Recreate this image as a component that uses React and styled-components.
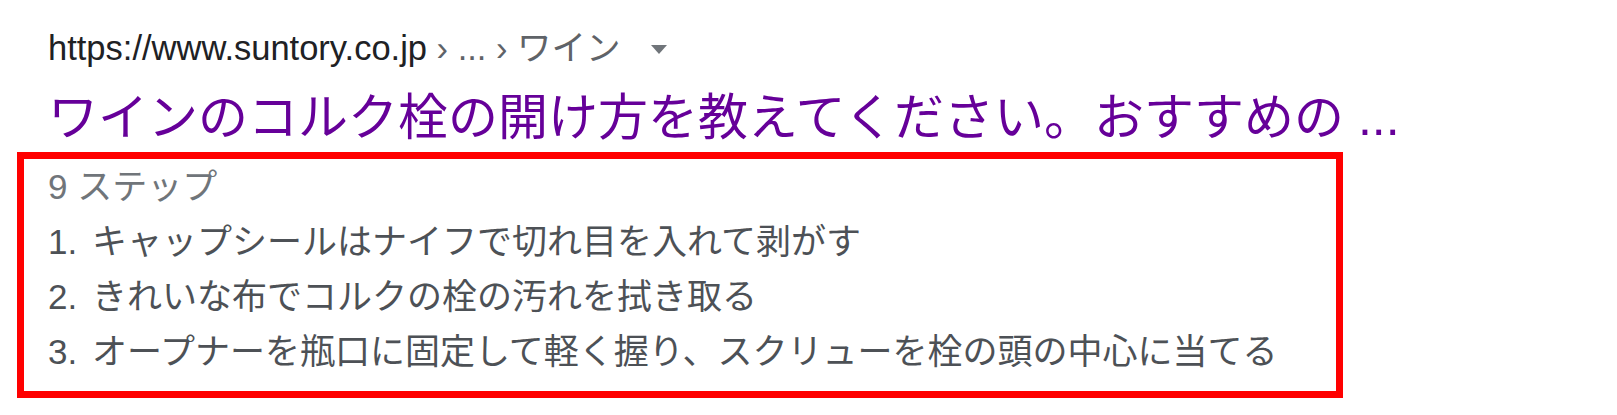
import React from 'react';
import styled, { createGlobalStyle } from 'styled-components';

const GlobalStyle = createGlobalStyle`
  body {
    margin: 0;
    background: #fff;
    font-family: "Liberation Sans", Arial, "Noto Sans CJK JP", sans-serif;
  }
`;

const Page = styled.div`
  padding: 26px 0 0 48px;
`;

const UrlLine = styled.div`
  display: flex;
  align-items: center;
  font-size: 34.5px;
  line-height: 44px;
  color: #202124;
  white-space: nowrap;
`;

const Crumbs = styled.span`
  color: #5f6368;
`;

const Caret = styled.span`
  display: inline-block;
  margin-left: 30px;
  margin-top: 2px;
  width: 0;
  height: 0;
  border-left: 8px solid transparent;
  border-right: 8px solid transparent;
  border-top: 9px solid #70757a;
`;

const Title = styled.h3`
  margin: 17px 0 0;
  font-weight: normal;
  font-size: 50px;
  line-height: 62px;
  color: #660099;
  white-space: nowrap;
`;

const Box = styled.div`
  margin: 3px 0 0 -31px;
  width: 1264px;
  border: 7px solid #ff0000;
  padding: 0 24px 12px;
`;

const Steps = styled.div`
  font-size: 35px;
  line-height: 55px;
  color: #70757a;
`;

const List = styled.ol`
  list-style: none;
  margin: 0;
  padding: 0;
`;

const Item = styled.li`
  display: flex;
  font-size: 35px;
  line-height: 55px;
  color: #4d5156;
`;

const Num = styled.span`
  flex: 0 0 44px;
`;

const steps = [
  'キャップシールはナイフで切れ目を入れて剥がす',
  'きれいな布でコルクの栓の汚れを拭き取る',
  'オープナーを瓶口に固定して軽く握り、スクリューを栓の頭の中心に当てる',
];

export default function App() {
  return (
    <>
      <GlobalStyle />
      <Page>
        <UrlLine>
          https://www.suntory.co.jp<Crumbs>&nbsp;› ... › ワイン</Crumbs>
          <Caret />
        </UrlLine>
        <Title>ワインのコルク栓の開け方を教えてください。おすすめの ...</Title>
        <Box>
          <Steps>9 ステップ</Steps>
          <List>
            {steps.map((s, i) => (
              <Item key={i}>
                <Num>{i + 1}.</Num>
                <span>{s}</span>
              </Item>
            ))}
          </List>
        </Box>
      </Page>
    </>
  );
}
